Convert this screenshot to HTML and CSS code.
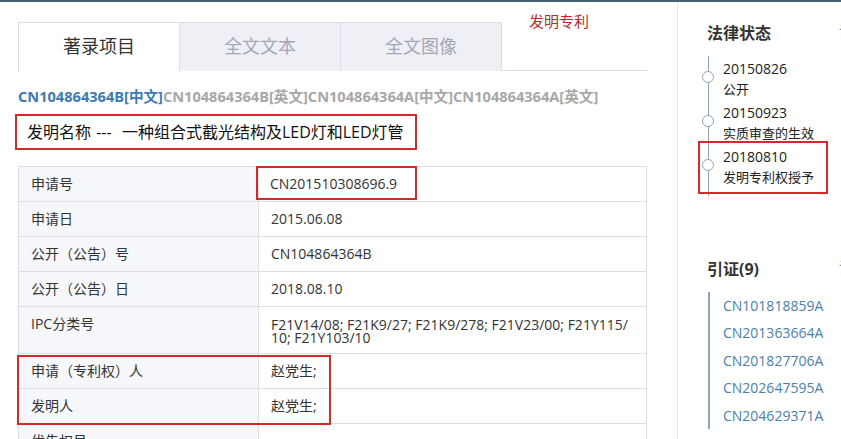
FILE: index.html
```html
<!DOCTYPE html>
<html lang="zh-CN">
<head>
    <meta charset="UTF-8">
    <title>专利详情</title>
    <link rel="stylesheet" href="styles.css">
</head>
<body>
    <div class="top-line"></div>
    <div class="page">
        <div class="main">
            <div class="patent-type">发明专利</div>
            <div class="tabs">
                <div class="tab active">著录项目</div>
                <div class="tab">全文文本</div>
                <div class="tab">全文图像</div>
            </div>
            <div class="versions">
                <a class="cur">CN104864364B[中文]</a><a>CN104864364B[英文]</a><a>CN104864364A[中文]</a><a>CN104864364A[英文]</a>
            </div>
            <div class="title-box">发明名称 ---&nbsp; 一种组合式截光结构及LED灯和LED灯管</div>

            <div class="info-table">
                <div class="row">
                    <div class="key">申请号</div>
                    <div class="val"><span class="mark">CN201510308696.9</span></div>
                </div>
                <div class="row">
                    <div class="key">申请日</div>
                    <div class="val">2015.06.08</div>
                </div>
                <div class="row">
                    <div class="key">公开（公告）号</div>
                    <div class="val">CN104864364B</div>
                </div>
                <div class="row">
                    <div class="key">公开（公告）日</div>
                    <div class="val">2018.08.10</div>
                </div>
                <div class="row tall">
                    <div class="key">IPC分类号</div>
                    <div class="val">F21V14/08; F21K9/27; F21K9/278; F21V23/00; F21Y115/<br>10; F21Y103/10</div>
                </div>
                <div class="marked-rows">
                    <div class="row">
                        <div class="key">申请（专利权）人</div>
                        <div class="val">赵党生;</div>
                    </div>
                    <div class="row">
                        <div class="key">发明人</div>
                        <div class="val">赵党生;</div>
                    </div>
                </div>
                <div class="row">
                    <div class="key">优先权号</div>
                    <div class="val"></div>
                </div>
            </div>
        </div>

        <div class="side">
            <div class="side-head">
                <span>法律状态</span><span class="more">详情</span>
            </div>
            <ul class="timeline">
                <li><div>20150826</div><div>公开</div></li>
                <li><div>20150923</div><div>实质审查的生效</div></li>
                <li class="marked"><div>20180810</div><div>发明专利权授予</div></li>
            </ul>

            <div class="side-head cite-head">
                <span>引证(9)</span><span class="more">详情</span>
            </div>
            <ul class="cite-list">
                <li><a>CN101818859A</a></li>
                <li><a>CN201363664A</a></li>
                <li><a>CN201827706A</a></li>
                <li><a>CN202647595A</a></li>
                <li><a>CN204629371A</a></li>
            </ul>
        </div>
    </div>
</body>
</html>
```

FILE: styles.css
```css
/* Patent detail page */
body {
    margin: 0;
    width: 841px;
    height: 439px;
    overflow: hidden;
    background-color: #fff;
    font-family: "Open Sans", "Noto Sans CJK SC", sans-serif;
    color: #222;
}

.top-line {
    height: 2px;
    background-color: #3d6470;
}

.page {
    display: flex;
    height: 437px;
    overflow: hidden;
}

.main {
    position: relative;
    width: 629px;
    padding: 19px 30px 0 18px;
}

.patent-type {
    position: absolute;
    left: 529px;
    top: 8px;
    font-size: 15px;
    color: #c1272d;
}

/* tabs */
.tabs {
    display: flex;
    border-bottom: 1px solid #dcdee5;
    height: 49px;
}

.tab {
    width: 161px;
    height: 49px;
    line-height: 47px;
    text-align: center;
    font-size: 18px;
    color: #a4a8b4;
    background-color: #eef0f6;
    border: 1px solid #dcdee5;
    border-left: none;
    border-bottom: none;
    box-sizing: border-box;
    margin-top: 1px;
}

.tab.active {
    width: 162px;
    color: #333;
    background-color: #fff;
    border-left: 1px solid #dcdee5;
    height: 50px;
    margin-bottom: -1px;
}

.versions {
    margin-top: 15px;
    font-size: 14.6px;
    font-weight: bold;
    color: #a7a7a7;
    white-space: nowrap;
    line-height: 20px;
}

.versions .cur {
    color: #3d7ab2;
}

.title-box {
    display: inline-block;
    margin: 8px 0 0 -3px;
    padding: 3px 11px 5px 10px;
    border: 2px solid #d42a2a;
    font-size: 16px;
    color: #111;
    white-space: nowrap;
    word-spacing: 1px;
}

/* info table */
.info-table {
    margin-top: 16px;
    width: 627px;
    border: 1px solid #dcdee5;
    border-bottom: none;
    font-size: 14px;
}

.row {
    display: flex;
    height: 34px;
    border-bottom: 1px solid #dcdee5;
}

.row.tall {
    height: 46px;
}

.key {
    width: 240px;
    padding: 8px 0 0 12px;
    background-color: #f6f7fb;
    border-right: 1px solid #dcdee5;
    color: #333;
    box-sizing: border-box;
}

.val {
    flex: 1;
    padding: 8px 0 0 12px;
    color: #333;
}

.row .key, .row .val {
    line-height: 18px;
}

.row.tall .val {
    line-height: 13px;
    padding-top: 11px;
}

.mark {
    display: inline-block;
    margin: -13px 0 0 -15px;
    padding: 7px 18px 5px 12px;
    border: 2px solid #d42a2a;
}

.marked-rows {
    position: relative;
}

.marked-rows::after {
    content: "";
    position: absolute;
    left: -2px;
    top: 1px;
    width: 310px;
    height: 66px;
    border: 2px solid #d42a2a;
}

/* side panel */
.side {
    flex: 1;
    border-left: 1px solid #e4e5ea;
    padding: 18px 0 0 29px;
    white-space: nowrap;
}

.side-head {
    display: flex;
    justify-content: space-between;
    width: 160px;
    font-size: 16px;
    font-weight: bold;
    color: #333;
}

.side-head .more {
    font-size: 14px;
    font-weight: normal;
    color: #999;
}

ul {
    list-style: none;
    margin: 0;
    padding: 0;
}

.timeline {
    margin: 12px 0 0 1px;
    border-left: 1px solid #8ea6b8;
    padding: 2px 0 6px 0;
    width: 110px;
}

.timeline li {
    position: relative;
    padding-left: 14px;
    line-height: 21px;
    margin-bottom: 2px;
}

.timeline li div:first-child {
    font-size: 14px;
}

.timeline li div + div {
    font-size: 13px;
}

.timeline li::before {
    content: "";
    position: absolute;
    left: -7px;
    top: 13px;
    width: 10px;
    height: 10px;
    border: 1px solid #8ea6b8;
    border-radius: 50%;
    background-color: #fff;
}

.timeline li.marked::after {
    content: "";
    position: absolute;
    left: -11px;
    top: -5px;
    width: 126px;
    height: 49px;
    border: 2px solid #d42a2a;
}

.cite-head {
    margin-top: 60px;
}

.cite-list {
    margin: 12px 0 0 1px;
    border-left: 2px solid #8ea6b8;
    padding: 0 0 0 13px;
}

.cite-list li {
    font-size: 14px;
    line-height: 27.4px;
    color: #4a80ad;
}
```
